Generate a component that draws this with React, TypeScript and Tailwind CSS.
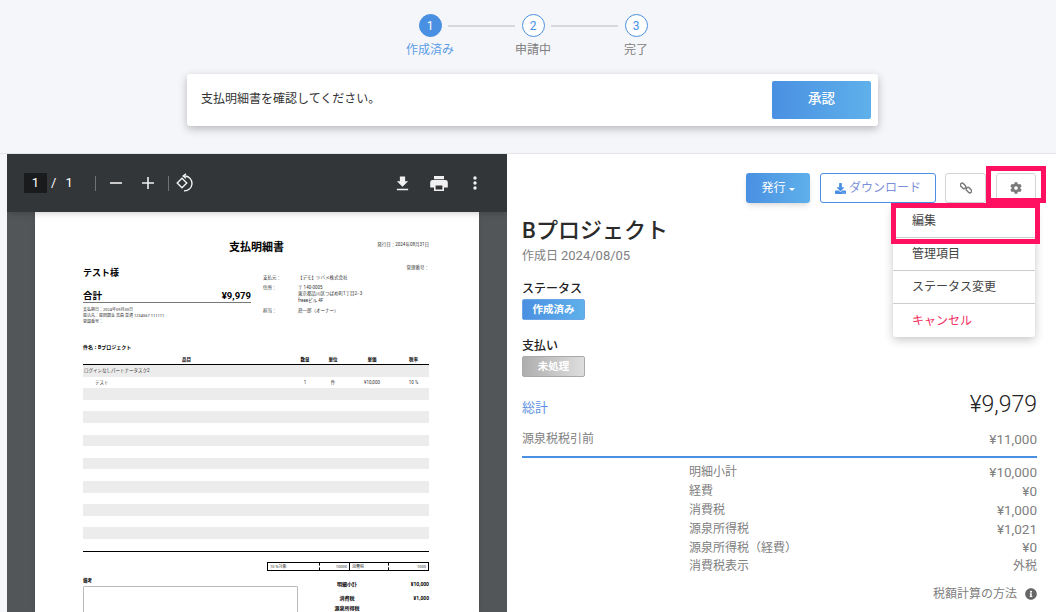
import { FaCog, FaDownload, FaInfoCircle } from "react-icons/fa";

const font = "font-['Roboto','Noto_Sans_CJK_JP',sans-serif]";

function Step({ n, label, active }: { n: number; label: string; active?: boolean }) {
  return (
    <div className="flex w-[60px] flex-col items-center">
      <div
        className={
          active
            ? "flex h-[23px] w-[23px] items-center justify-center rounded-full border border-[#4a90e2] bg-[#4a90e2] text-[12px] text-white"
            : "flex h-[23px] w-[23px] items-center justify-center rounded-full border border-[#4a90e2] bg-white text-[12px] text-[#4a90e2]"
        }
      >
        {n}
      </div>
      <div className={active ? "mt-[4px] text-[12px] leading-[18px] text-[#5b9de6]" : "mt-[4px] text-[12px] leading-[18px] text-[#808080]"}>
        {label}
      </div>
    </div>
  );
}

function Line() {
  return <div className="mt-[11px] h-[2px] w-[67px] shrink-0 bg-[#d8d8dc]" />;
}

function DocRows() {
  const rows = Array.from({ length: 16 }, (_, i) => i);
  return (
    <div className="border-y-[1px] border-black">
      {rows.map((i) => (
        <div key={i} className={i % 2 === 0 ? "h-[11.6px] bg-[#ececec]" : "h-[11.6px] bg-white"}>
          {i === 0 && <div className="pl-px text-[4.5px] leading-[11.6px] text-[#333]">ログインなしパートナータスク2</div>}
          {i === 1 && (
            <div className="flex text-[4.5px] leading-[11.6px] text-[#333]">
              <div className="w-[207px] pl-[12px]">テスト</div>
              <div className="w-[30px] text-center">1</div>
              <div className="w-[26px] text-center">件</div>
              <div className="w-[52px] text-center">¥10,000</div>
              <div className="w-[31px] text-center">10 %</div>
            </div>
          )}
        </div>
      ))}
    </div>
  );
}

function PdfPage() {
  return (
    <div className="mx-[28px] h-[400px] overflow-hidden bg-white pr-[50px] pl-[48px] text-black shadow-md">
      <div className="flex pt-[28px]">
        <div className="w-[146px]" />
        <div className="w-[102px] text-[11px] leading-[16px] font-bold">支払明細書</div>
        <div className="ml-auto pt-px text-[4.5px] leading-[8px] text-[#333]">発行日：2024年08月31日</div>
      </div>
      <div className="pt-[8px] text-right text-[4.5px] leading-[8px] text-[#333]">管理番号：</div>
      <div className="flex">
        <div className="w-[168px]">
          <div className="mt-[-6px] text-[9px] leading-[14px] font-bold">テスト様</div>
          <div className="mt-[10px] flex justify-between border-b border-[#777] text-[9.5px] leading-[12px] font-bold">
            <span>合計</span>
            <span>¥9,979</span>
          </div>
          <div className="mt-[4px] text-[4px] leading-[6px] text-[#333]">
            <div>支払期日：2024年09月30日</div>
            <div>振込先：振岡銀金 高森 普通 1234567 111111</div>
            <div>登録番号：</div>
          </div>
        </div>
        <div className="ml-[12px] text-[4.5px] leading-[6.5px] text-[#333]">
          <div className="flex pt-[3px]">
            <div className="w-[35px]">支払元：</div>
            <div>【デモ】ツバメ株式会社</div>
          </div>
          <div className="mt-[3px] flex">
            <div className="w-[35px]">住所：</div>
            <div>
              <div>〒 140-0005</div>
              <div>東京都品川区つばめ町1丁目2−3</div>
              <div>freeeビル 4F</div>
            </div>
          </div>
          <div className="mt-[4px] flex">
            <div className="w-[35px]">担当：</div>
            <div>燕一郎（オーナー）</div>
          </div>
        </div>
      </div>
      <div className="mt-[18px] text-[5px] leading-[8px] font-bold">件名：Bプロジェクト</div>
      <div className="mt-[5px] flex text-[4.5px] leading-[8px] font-bold">
        <div className="w-[207px] text-center">品目</div>
        <div className="w-[30px] text-center">数量</div>
        <div className="w-[26px] text-center">単位</div>
        <div className="w-[52px] text-center">単価</div>
        <div className="w-[31px] text-center">税率</div>
      </div>
      <DocRows />
      <div className="mt-[10px] ml-auto flex h-[9px] w-[162px] border border-black text-[4px] leading-[7px] text-[#333]">
        <div className="w-[52px] border-r border-dashed border-black pl-[2px]">10 %対象</div>
        <div className="w-[30px] border-r border-black pr-[2px] text-right">10000</div>
        <div className="w-[39px] border-r border-dashed border-black pl-[2px]">消費税</div>
        <div className="flex-1 pr-[2px] text-right">1000</div>
      </div>
      <div className="mt-[6px] flex">
        <div className="w-[215px]">
          <div className="text-[4.5px] leading-[8px] font-bold">備考</div>
          <div className="mt-[1px] h-[40px] rounded-[1px] border border-[#bbb]" />
        </div>
        <div className="ml-[28px] flex-1 pt-[4px] text-[5px] leading-[7px] font-bold">
          <div className="flex justify-between">
            <span className="w-[42px] text-center">明細小計</span>
            <span>¥10,000</span>
          </div>
          <div className="mt-[7px] flex justify-between">
            <span className="w-[42px] text-center">消費税</span>
            <span>¥1,000</span>
          </div>
          <div className="mt-[3px] flex justify-between">
            <span className="w-[42px] text-center">源泉所得税</span>
          </div>
        </div>
      </div>
    </div>
  );
}

function PdfViewer() {
  return (
    <div className="flex h-[458px] w-[500px] shrink-0 flex-col overflow-hidden bg-[#525659]">
      <div className="relative z-10 flex h-[58px] shrink-0 items-center bg-[#323639] pr-[30px] pl-[17px] text-white shadow-md">
        <div className="flex h-[20px] w-[23px] items-center justify-center bg-[#191b1c] text-[13px]">1</div>
        <span className="ml-[4px] text-[13px]">/</span>
        <span className="ml-[9px] text-[13px]">1</span>
        <div className="ml-[22px] h-[15px] w-px bg-[#6f7275]" />
        <svg className="ml-[13px]" width="14" height="14" viewBox="0 0 14 14" fill="none" stroke="#f1f1f1" strokeWidth="1.6">
          <path d="M1 7h12" />
        </svg>
        <svg className="ml-[18px]" width="14" height="14" viewBox="0 0 14 14" fill="none" stroke="#f1f1f1" strokeWidth="1.6">
          <path d="M1 7h12M7 1v12" />
        </svg>
        <div className="ml-[13px] h-[15px] w-px bg-[#6f7275]" />
        <svg className="ml-[7px]" width="19" height="20" viewBox="0 0 19 20" fill="none" stroke="#f1f1f1" strokeWidth="1.4">
          <path d="M10 .8L7.2 3l2.8 2.2" />
          <path d="M7.5 3h1.7a7.4 7.4 0 1 1-1.2 14.8" />
          <path d="M6 5.2l4.8 4.8L6 14.8 1.2 10z" />
        </svg>
        <div className="ml-auto flex items-center gap-[20px]">
          <svg width="15" height="17" viewBox="0 0 16 17" fill="#f1f1f1">
            <path d="M5.2 1h5.6v5.2h3.2L8 12 2 6.2h3.2zM2 14h12v1.6H2z" />
          </svg>
          <svg width="18" height="17" viewBox="0 0 18 17" fill="#f1f1f1">
            <path fillRule="evenodd" d="M4 1h10v3.2H4zM2.6 5h12.8A2.4 2.4 0 0 1 17.8 7.4V12.6H14V16H4V12.6H.2V7.4A2.4 2.4 0 0 1 2.6 5zM5.6 10.6v3.8h6.8v-3.8z" />
          </svg>
          <svg className="ml-[5px]" width="4" height="14" viewBox="0 0 4 14" fill="#f1f1f1">
            <circle cx="2" cy="2" r="1.7" />
            <circle cx="2" cy="7" r="1.7" />
            <circle cx="2" cy="12" r="1.7" />
          </svg>
        </div>
      </div>
      <PdfPage />
    </div>
  );
}

function AmountRow({ label, value, small }: { label: string; value: string; small?: boolean }) {
  return (
    <div className="flex h-[18.8px] items-center justify-between pl-[167px] text-[12px] text-[#808080]">
      <span>{label}</span>
      <span className={small ? "text-[12px]" : "text-[13.5px]"}>{value}</span>
    </div>
  );
}

function DetailPanel() {
  return (
    <div className="relative flex-1 pt-[19px] pr-[19px] pl-[15px]">
      <div className="mr-px flex h-[30px] items-center justify-end">
        <button className="flex h-[30px] w-[64px] items-center justify-center rounded-[3px] bg-gradient-to-r from-[#4a90e2] to-[#5fb0ea] text-[12px] text-white shadow-md">
          発行
          <span className="mt-[2px] ml-[3px] h-0 w-0 border-x-[3px] border-t-[3px] border-x-transparent border-t-white" />
        </button>
        <button className="ml-[10px] flex h-[30px] w-[116px] items-center justify-center rounded-[3px] border border-[#4a90e2] text-[12px] text-[#7b8fd8]">
          <FaDownload className="mr-[3px] h-[11px] w-[11px] text-[#4a90e2]" />
          ダウンロード
        </button>
        <button className="ml-[9px] flex h-[30px] w-[41px] items-center justify-center rounded-[3px] border border-[#d5d5d5] text-[#7a7a7a]">
          <svg width="12" height="12" viewBox="0 0 13 13" fill="none" stroke="currentColor" strokeWidth="1.6">
            <rect x="0" y="2.2" width="6.6" height="4" rx="2" transform="rotate(45 3.3 4.2)" />
            <rect x="6.4" y="6.8" width="6.6" height="4" rx="2" transform="rotate(45 9.7 8.8)" />
          </svg>
        </button>
        <button className="ml-[10px] flex h-[30px] w-[40px] items-center justify-center rounded-[3px] border border-[#d5d5d5] text-[#7a7a7a]">
          <FaCog className="h-[12px] w-[12px]" />
        </button>
      </div>
      <h1 className="mt-[13px] text-[22px] leading-[30px] font-medium text-[#2b2b2b]">Bプロジェクト</h1>
      <div className="mt-[1px] text-[12px] leading-[18px] text-[#808080]">
        作成日 <span className="text-[13px]">2024/08/05</span>
      </div>
      <div className="mt-[14px] text-[12px] leading-[20px] font-medium text-[#222]">ステータス</div>
      <div className="flex h-[21px] w-[63px] items-center justify-center rounded-[2px] border border-[#6aa5e6] bg-gradient-to-r from-[#4a90e2] to-[#5fb0ea] text-[10.5px] font-bold text-white">
        作成済み
      </div>
      <div className="mt-[16px] text-[12px] leading-[20px] font-medium text-[#222]">支払い</div>
      <div className="flex h-[21px] w-[63px] items-center justify-center rounded-[2px] border border-[#aaa] bg-gradient-to-r from-[#aeaeae] to-[#dedede] text-[10.5px] font-bold text-white">
        未処理
      </div>
      <div className="mt-[13px] flex items-center justify-between">
        <span className="pt-[6px] text-[13px] text-[#5b8fe0]">総計</span>
        <span className="text-[23px] leading-[30px] font-light text-[#222]">¥9,979</span>
      </div>
      <div className="mt-[9px] flex items-center justify-between pb-[7px] text-[12px] leading-[20px] text-[#808080]">
        <span>源泉税税引前</span>
        <span className="text-[13.5px]">¥11,000</span>
      </div>
      <div className="mb-[5px] h-[2px] bg-[#4a90e2]" />
      <AmountRow label="明細小計" value="¥10,000" />
      <AmountRow label="経費" value="¥0" />
      <AmountRow label="消費税" value="¥1,000" />
      <AmountRow label="源泉所得税" value="¥1,021" />
      <AmountRow label="源泉所得税（経費）" value="¥0" />
      <AmountRow label="消費税表示" value="外税" small />
      <div className="mt-[9px] flex items-center justify-end text-[12px] text-[#808080]">
        税額計算の方法
        <FaInfoCircle className="ml-[8px] h-[12px] w-[12px] text-[#666]" />
      </div>

      <div className="absolute top-[51px] right-[21px] w-[142px] rounded-[3px] bg-white text-[12px] text-[#444] shadow-[0_3px_10px_rgba(0,0,0,0.22)]">
        <div className="flex h-[33px] items-center border-b border-[#ccc] pl-[19px]">編集</div>
        <div className="flex h-[33px] items-center border-b border-[#ccc] pl-[19px]">管理項目</div>
        <div className="flex h-[33px] items-center border-b border-[#ccc] pl-[19px]">ステータス変更</div>
        <div className="flex h-[33px] items-center pl-[19px] text-[#f0305f]">キャンセル</div>
      </div>
      <div className="pointer-events-none absolute top-[12px] right-[10px] h-[37px] w-[60px] border-[5px] border-[#ff1060]" />
      <div className="pointer-events-none absolute top-[49px] right-[16px] h-[41px] w-[149px] border-[5px] border-[#ff1060]" />
    </div>
  );
}

export default function App() {
  return (
    <div className={`${font} h-[612px] w-[1056px] overflow-hidden bg-[#f5f6fa]`}>
      <div className="h-[154px] border-b border-[#e4e4e8]">
        <div className="flex justify-center pt-[14px] pl-[10px]">
          <Step n={1} label="作成済み" active />
          <div className="mx-[-12px]"><Line /></div>
          <Step n={2} label="申請中" />
          <div className="mx-[-12px]"><Line /></div>
          <Step n={3} label="完了" />
        </div>
        <div className="mt-[15px] ml-[187px] flex h-[52px] w-[691px] items-center rounded-[3px] bg-white pr-[7px] pl-[14px] text-[12px] text-[#333] shadow-[0_3px_8px_rgba(0,0,0,0.25)]">
          <span className="mb-[3px]">支払明細書を確認してください。</span>
          <button className="ml-auto h-[38px] w-[99px] rounded-[2px] bg-gradient-to-r from-[#4a90e2] to-[#5fb0ea] pb-[3px] text-[13.5px] font-medium text-white">
            承認
          </button>
        </div>
      </div>
      <div className="flex">
        <div className="w-[7px] shrink-0" />
        <PdfViewer />
        <div className="flex flex-1 bg-white">
          <DetailPanel />
        </div>
      </div>
    </div>
  );
}
